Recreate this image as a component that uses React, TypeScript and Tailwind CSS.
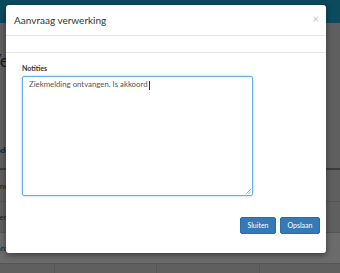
import React from "react";

export default function App() {
  const font = { fontFamily: "Lato, 'Noto Sans', sans-serif" };
  return (
    <div className="relative w-[340px] h-[273px] overflow-hidden bg-[#5f5f5f]" style={font}>
      {/* background page (dimmed by backdrop) */}
      <div className="h-[23px] bg-[#0c4a5e]" />
      <div className="pt-[27px] text-[18px] leading-[20px] text-[#1a1a1a] -ml-[11px] whitespace-nowrap">Verzoeken</div>
      <div className="mt-[62px] flex flex-col text-[8px] text-[#1e1e1e] whitespace-nowrap">
        <div className="h-[38px] flex items-center border-b-2 border-[#3c3c3c] -ml-[9px] font-bold">
          <span>Code</span>
        </div>
        <div className="h-[32px] flex items-center border-b border-[#555] -ml-[9px]">
          <span>Functie</span>
        </div>
        <div className="h-[31px] flex items-center border-b border-[#555] -ml-[5px]">
          <span>Periode</span>
        </div>
        <div className="h-[31px] flex items-center border-b border-[#555] -ml-[5px] bg-[#6b6b6b]">
          <span>Groep</span>
        </div>
        <div className="h-[20px] grid grid-cols-[55px_102px_103px_80px]">
          <div className="border-r border-[#555]" />
          <div className="border-r border-[#555]" />
          <div className="border-r border-[#555]" />
          <div />
        </div>
      </div>

      {/* modal */}
      <div className="absolute left-[6px] top-[5px] w-[320px] h-[248px] bg-white rounded-[3px] shadow-[0_2px_6px_rgba(0,0,0,0.45)] flex flex-col">
        <div className="h-[31px] border-b border-[#e5e5e5] flex items-center justify-between pl-[8px] pr-[7px]">
          <span className="text-[10px] text-[#333] pt-[1px]">Aanvraag verwerking</span>
          <span className="text-[11px] leading-none text-[#c8c8c8] -mt-[3px]">×</span>
        </div>
        <div className="h-[17px] border-b border-[#e5e5e5]" />
        <div className="pl-[16px] pt-[11px] flex flex-col">
          <label className="text-[7px] font-bold text-[#333] leading-[9px]">Notities</label>
          <div className="relative mt-[3px] w-[231px] h-[120px] border border-[#66afe9] rounded-[2px] shadow-[0_0_3px_rgba(102,175,233,0.6)] pl-[6px] pt-[1px] text-[7.8px] leading-[12px] text-[#555]">
            <span>Ziekmelding ontvangen. Is akkoord</span>
            <span className="inline-block w-[1px] h-[9px] bg-[#333] align-middle ml-[1px]" />
            <svg className="absolute right-[1px] bottom-[1px]" width="6" height="6" viewBox="0 0 6 6">
              <path d="M6 1 L1 6 M6 3.5 L3.5 6" stroke="#999" strokeWidth="0.8" />
            </svg>
          </div>
        </div>
        <div className="flex justify-end gap-[4px] pr-[6px] mt-[21px]">
          <button className="w-[36px] h-[17px] bg-[#337ab7] border border-[#2e6da4] rounded-[2px] text-white text-[7px]">Sluiten</button>
          <button className="w-[40px] h-[17px] bg-[#337ab7] border border-[#2e6da4] rounded-[2px] text-white text-[7px]">Opslaan</button>
        </div>
      </div>
    </div>
  );
}
